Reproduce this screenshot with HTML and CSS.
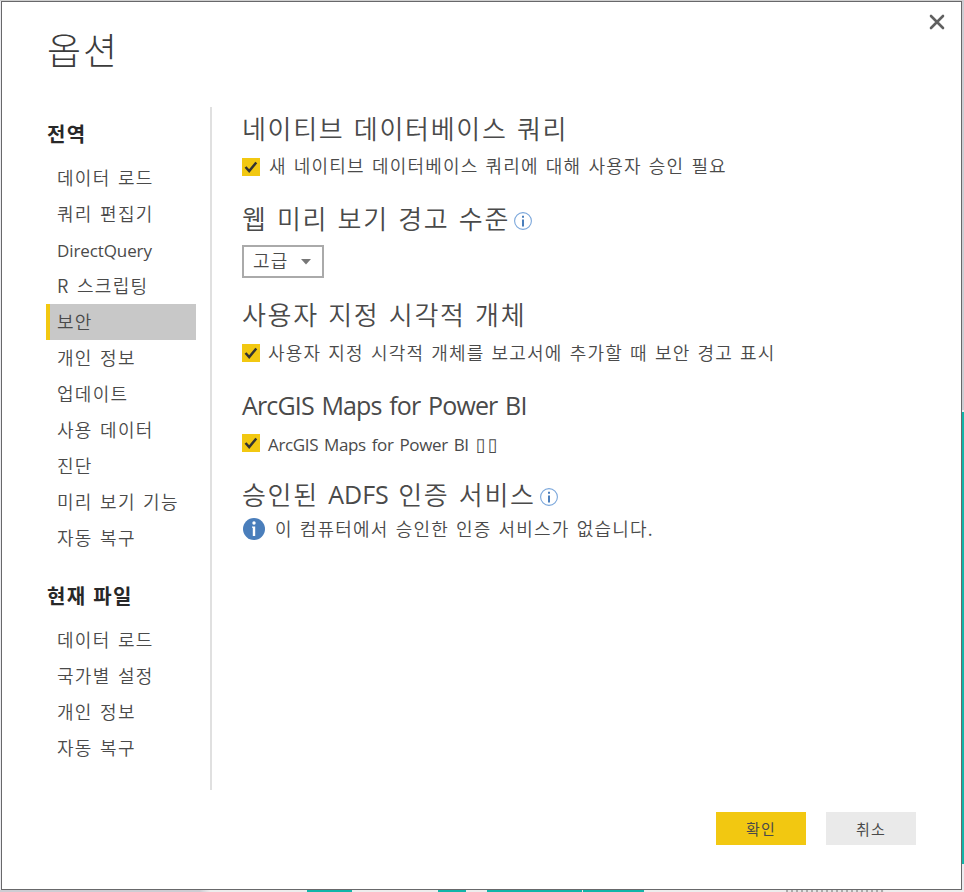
FILE: index.html
```html
<!DOCTYPE html>
<html lang="ko">
<head>
<meta charset="utf-8">
<title>옵션</title>
<link rel="stylesheet" href="styles.css">
</head>
<body>
<main class="dialog">
  <button class="close" aria-label="닫기"><svg width="16" height="16" viewBox="0 0 16 16"><path d="M2 2 14 14M14 2 2 14" fill="none" stroke="#606060" stroke-width="2.6" stroke-linecap="round"/></svg></button>
  <h1>옵션</h1>
  <div class="body">
    <nav>
      <h2>전역</h2>
      <ul>
        <li>데이터 로드</li>
        <li>쿼리 편집기</li>
        <li class="latin">DirectQuery</li>
        <li>R 스크립팅</li>
        <li class="selected">보안</li>
        <li>개인 정보</li>
        <li>업데이트</li>
        <li>사용 데이터</li>
        <li>진단</li>
        <li>미리 보기 기능</li>
        <li>자동 복구</li>
      </ul>
      <h2>현재 파일</h2>
      <ul>
        <li>데이터 로드</li>
        <li>국가별 설정</li>
        <li>개인 정보</li>
        <li>자동 복구</li>
      </ul>
    </nav>
    <div class="content">
      <section class="native">
        <h3>네이티브 데이터베이스 쿼리</h3>
        <label class="row first"><span class="check"><svg width="18" height="18" viewBox="0 0 18 18"><path d="M3.5 9 7.2 13 14.3 4.5" fill="none" stroke="#333" stroke-width="2.5"/></svg></span><span>새 네이티브 데이터베이스 쿼리에 대해 사용자 승인 필요</span></label>
      </section>
      <section class="web">
        <h3>웹 미리 보기 경고 수준<svg class="info" width="18" height="18" viewBox="0 0 18 18"><circle cx="9" cy="9" r="8.4" fill="#fff" stroke="#7ba7db" stroke-width="1.1"/><path d="M8 3.7h2v2H8zM8 7.5h2V14.5H8z" fill="#4a7ebb"/></svg></h3>
        <div class="select"><span>고급</span><svg width="10" height="6" viewBox="0 0 10 6"><path d="M0 0h10L5 5.5z" fill="#777"/></svg></div>
      </section>
      <section class="visuals">
        <h3>사용자 지정 시각적 개체</h3>
        <label class="row"><span class="check"><svg width="18" height="18" viewBox="0 0 18 18"><path d="M3.5 9 7.2 13 14.3 4.5" fill="none" stroke="#333" stroke-width="2.5"/></svg></span><span>사용자 지정 시각적 개체를 보고서에 추가할 때 보안 경고 표시</span></label>
      </section>
      <section class="arcgis">
        <h3 class="latin">ArcGIS Maps for Power BI</h3>
        <label class="row latin"><span class="check"><svg width="18" height="18" viewBox="0 0 18 18"><path d="M3.5 9 7.2 13 14.3 4.5" fill="none" stroke="#333" stroke-width="2.5"/></svg></span><span>ArcGIS Maps for Power BI <span class="boxes">▯▯</span></span></label>
      </section>
      <section class="adfs">
        <h3>승인된 <span class="latin">ADFS</span> 인증 서비스<svg class="info" width="18" height="18" viewBox="0 0 18 18"><circle cx="9" cy="9" r="8.4" fill="#fff" stroke="#7ba7db" stroke-width="1.1"/><path d="M8 3.7h2v2H8zM8 7.5h2V14.5H8z" fill="#4a7ebb"/></svg></h3>
        <p class="row note"><svg width="22" height="22" viewBox="0 0 22 22"><circle cx="11" cy="11" r="11" fill="#4a7ebb"/><circle cx="11" cy="5" r="1.7" fill="#fff"/><path d="M9 8.5h3.2V18H9.8v-8.2H9z" fill="#fff"/></svg><span>이 컴퓨터에서 승인한 인증 서비스가 없습니다.</span></p>
      </section>
    </div>
  </div>
  <footer>
    <button class="primary">확인</button>
    <button>취소</button>
  </footer>
</main>
</body>
</html>
```
FILE: styles.css
```css
* { box-sizing: border-box; margin: 0; padding: 0; }
html { height: 892px; overflow: hidden; }
body {
  height: 892px;
  padding: 1px 2px 2px 1px;
  overflow: hidden;
  font-family: "Noto Sans CJK KR", sans-serif;
  color: #4a4a4a;
  background:
    linear-gradient(#12b5a9, #12b5a9) 962px 412px / 2px 452px no-repeat,
    linear-gradient(#cdcdd3, #cdcdd3) 962px 0 / 2px 410px no-repeat,
    linear-gradient(#12b5a9, #12b5a9) 307px 890px / 45px 2px no-repeat,
    linear-gradient(#12b5a9, #12b5a9) 438px 890px / 28px 2px no-repeat,
    linear-gradient(#12b5a9, #12b5a9) 487px 890px / 95px 2px no-repeat,
    linear-gradient(#12b5a9, #12b5a9) 583px 890px / 61px 2px no-repeat,
    repeating-linear-gradient(90deg, #aaa 0 2px, #e6e6e6 2px 5px) 786px 890px / 98px 2px no-repeat,
    linear-gradient(90deg, #cdcdd3 200px, #ededed 210px) 0 890px / 964px 2px no-repeat,
    linear-gradient(#cfcfcf, #cfcfcf) 0 0 / 964px 1px no-repeat,
    #ececf0;
}
.dialog {
  position: relative;
  display: flex;
  flex-direction: column;
  width: 961px;
  height: 889px;
  border: 1px solid #68686a;
  background: #fff;
}
.close { position: absolute; top: 12px; right: 16px; width: 16px; height: 16px; border: 0; background: none; }
.close svg, .check svg, .select svg, .note svg { display: block; }
h1 { height: 105px; padding: 17px 0 0 45px; font-size: 37px; line-height: 60px; font-weight: 300; letter-spacing: 2px; color: #3c3c3c; }
.body { display: flex; height: 683px; padding-left: 44px; }
nav { width: 166px; height: 683px; border-right: 2px solid #e0e0e0; }
nav h2 { height: 53px; padding: 12px 0 0 1px; font-size: 20px; line-height: 30px; font-weight: 700; letter-spacing: 1.3px; color: #282828; }
nav ul + h2 { height: 66px; padding-top: 25px; }
nav ul { list-style: none; width: 150px; }
nav li { height: 36px; padding-left: 11px; font-size: 18px; line-height: 34px; font-weight: 350; letter-spacing: 1.3px; word-spacing: 1px; white-space: nowrap; }
nav li.latin { font-family: "Open Sans", sans-serif; font-size: 17px; line-height: 37px; font-weight: 400; letter-spacing: -.1px; }
nav li.selected { padding-left: 7px; border-left: 4px solid #f2c811; background: #c8c8c8; }
.content { display: flex; flex-direction: column; flex: 1; padding-left: 30px; }
h3 { display: flex; align-items: center; height: 40px; font-size: 26px; line-height: 36px; padding-bottom: 4px; font-weight: 350; letter-spacing: 1.7px; word-spacing: .4px; white-space: pre; }
.latin { font-family: "Open Sans", sans-serif; letter-spacing: -.5px; word-spacing: 0; }
h3 .latin { font-size: 25px; font-weight: 400; letter-spacing: 0; }
h3.latin { font-size: 25px; font-weight: 400; letter-spacing: -.85px; word-spacing: 2px; }
.info { margin: 5px 0 0 4px; }
.row { display: flex; align-items: center; height: 32px; gap: 8px; font-size: 18px; line-height: 32px; font-weight: 350; letter-spacing: 1.18px; word-spacing: .9px; white-space: nowrap; }
.row.latin { height: 35px; font-size: 17px; font-weight: 400; letter-spacing: -.35px; word-spacing: 1.8px; }
.row.latin .check { margin-bottom: 3px; }
.check { width: 18px; height: 18px; background: #f2c811; }
.boxes { margin-left: 1px; font-family: "DejaVu Sans", sans-serif; font-size: 18px; line-height: 20px; letter-spacing: 2px; }
section { width: 560px; }
.native { height: 91px; padding-top: 3px; }
.native .row { height: 30px; gap: 9px; }
.native .check { margin-top: 3px; }
.web { height: 96px; padding-top: 2px; }
.visuals { height: 91px; padding-top: 2px; }
.visuals .row { height: 32px; }
.visuals .check { margin-top: 1px; }
.arcgis { height: 90px; padding-top: 2px; }
.adfs { padding-top: 1px; }
.select { display: flex; align-items: center; justify-content: space-between; width: 82px; height: 33px; margin-top: 5px; padding: 0 11px 0 9px; border: 2px solid #aaa; font-size: 18px; line-height: 27px; font-weight: 350; letter-spacing: 1.2px; }
.select span { margin-top: -2px; }
.note { gap: 10px; height: 26px; padding-left: 1px; }
.note span { margin-top: -3px; }
footer { display: flex; gap: 20px; margin: 22px 0 0 714px; }
footer button { width: 90px; height: 33px; border: 0; background: #eaeaea; color: #4a4a4a; font: 400 15px/33px "Noto Sans CJK KR", sans-serif; letter-spacing: 1.3px; }
footer .primary { background: #f2c811; }
```
